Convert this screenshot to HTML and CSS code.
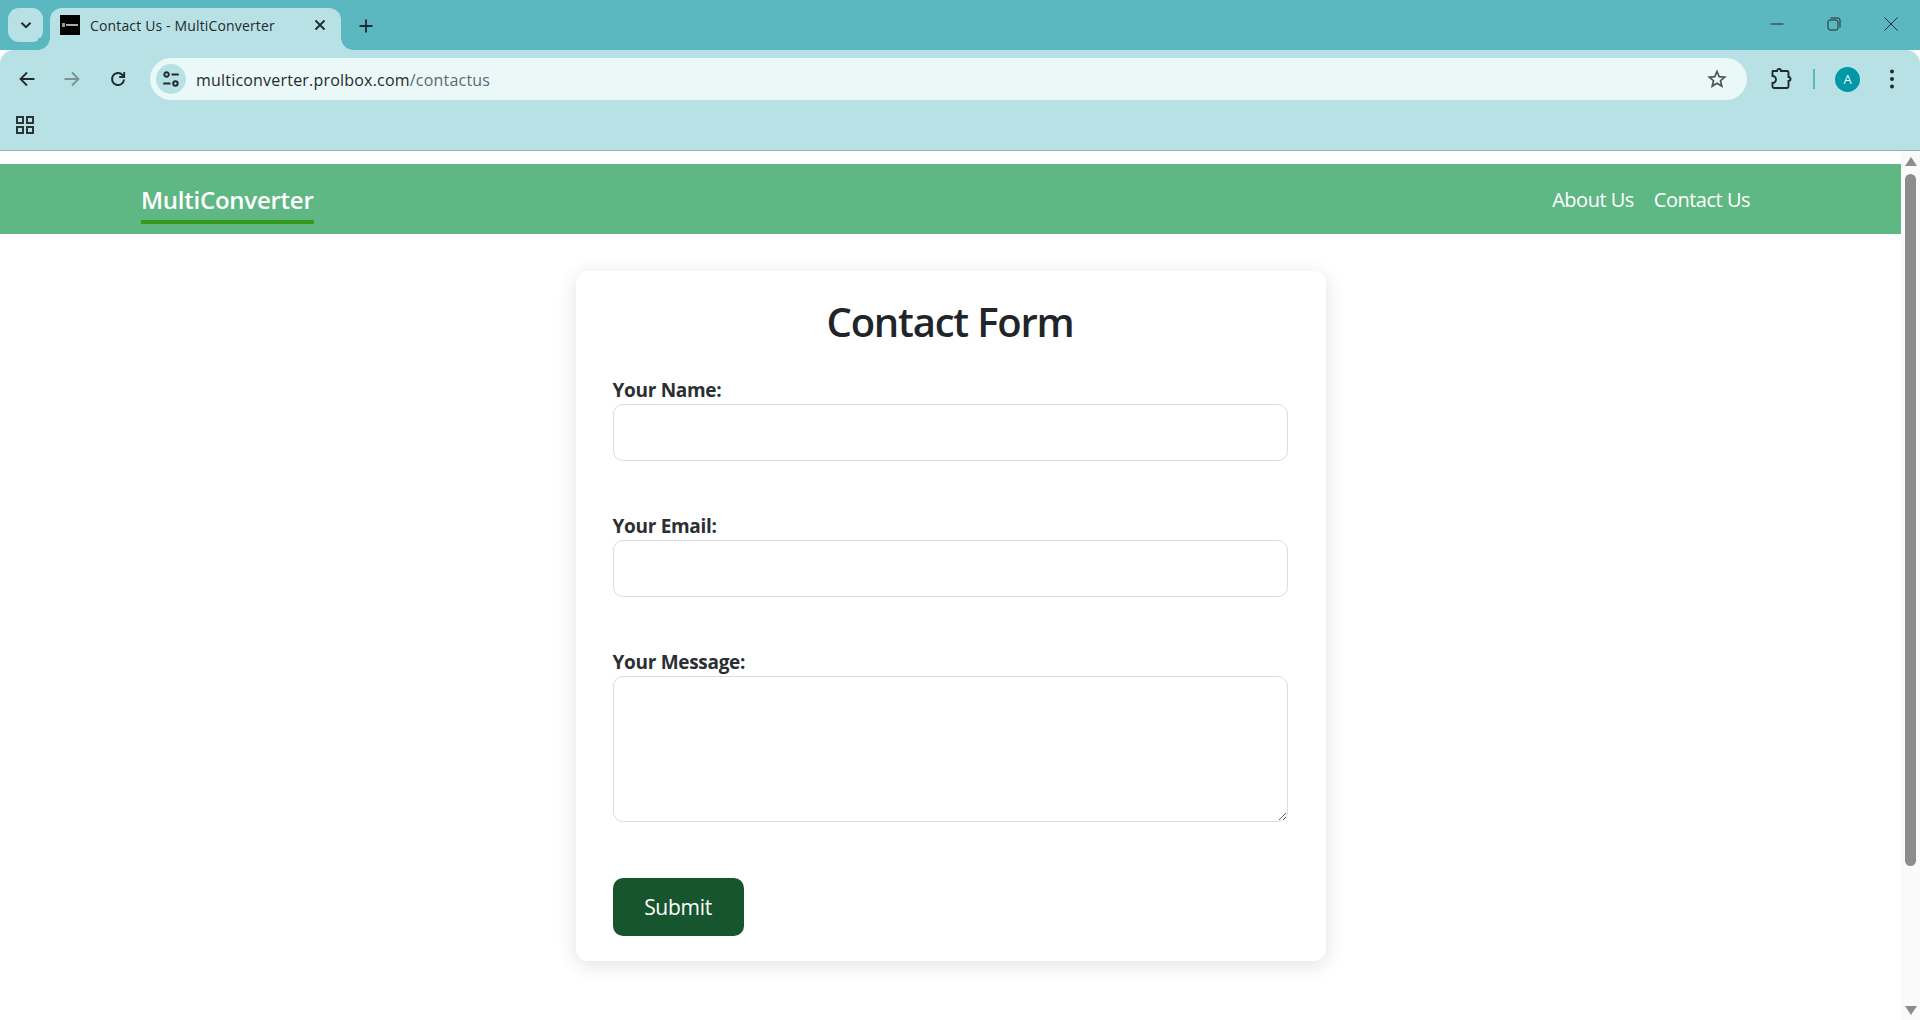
FILE: index.html
```html
<!DOCTYPE html>
<html lang="en">
<head>
  <meta charset="UTF-8" />
  <title>Contact Us - MultiConverter</title>
  <link rel="stylesheet" href="styles.css">
</head>
<body>

  <!-- browser frame -->
  <div class="tabstrip">
    <button class="tab-search">
      <svg width="14" height="14" viewBox="0 0 14 14"><path d="M2.5 4.8 7 9.2l4.500-4.400" fill="none" stroke="#1f2b2e" stroke-width="2"/></svg>
    </button>
    <div class="tab">
      <svg class="favicon" width="20" height="20" viewBox="0 0 20 20">
        <rect width="20" height="20" fill="#000"/>
        <rect x="2" y="8" width="3" height="4" fill="#999"/>
        <rect x="6" y="9" width="12" height="2" fill="#aaa"/>
      </svg>
      <span class="tab-title">Contact Us - MultiConverter</span>
      <svg class="tab-close" width="12" height="12" viewBox="0 0 12 12"><path d="M1.500 1.500l9 9m0-9l-9 9" stroke="#1f2b2e" stroke-width="1.800"/></svg>
    </div>
    <svg class="new-tab" width="14" height="14" viewBox="0 0 14 14"><path d="M7 .5v13M.5 7h13" stroke="#1f2b2e" stroke-width="1.800"/></svg>
    <div class="window-btns">
      <svg width="14" height="14" viewBox="0 0 14 14"><path d="M.5 7h13" stroke="#1f2b2e" stroke-width="1"/></svg>
      <svg width="14" height="14" viewBox="0 0 14 14" fill="none" stroke="#1f2b2e"><rect x="1" y="3" width="10" height="10" rx="2"/><path d="M3.500 1h7.500a2 2 0 0 1 2 2v7.500"/></svg>
      <svg width="14" height="14" viewBox="0 0 14 14"><path d="M.5.500l13 13m0-13l-13 13" stroke="#1f2b2e" stroke-width="1"/></svg>
    </div>
  </div>

  <div class="toolbar">
    <svg class="tool-icon" width="18" height="18" viewBox="0 0 18 18" fill="none" stroke="#1f2b2e" stroke-width="1.800"><path d="M16.500 9H2.500M9 2.500 2.500 9 9 15.500"/></svg>
    <svg class="tool-icon" width="18" height="18" viewBox="0 0 18 18" fill="none" stroke="#7d9093" stroke-width="1.800"><path d="M1.500 9h14M9 2.500 15.500 9 9 15.500"/></svg>
    <svg class="tool-icon" width="18" height="18" viewBox="0 0 18 18" fill="none" stroke="#1f2b2e" stroke-width="2"><path d="M15 9.500A6 6 0 1 1 13.300 4.800L15 6.500"/><path d="M15.200 2v5h-5" stroke-width="1.800"/></svg>
    <div class="omnibox">
      <span class="site-info">
        <svg width="20" height="20" viewBox="0 0 18 18" fill="none" stroke="#1f2b2e" stroke-width="1.800"><circle cx="5" cy="5" r="2"/><path d="M9.500 5H16M2 13h6.500"/><circle cx="13" cy="13" r="2"/></svg>
      </span>
      <span class="url">multiconverter.prolbox.com<span class="url-path">/contactus</span></span>
      <svg class="star" width="20" height="20" viewBox="0 0 20 20"><path d="M10 2.500l2.200 5.100 5.500.5-4.200 3.600 1.300 5.400L10 14.200l-4.800 2.900 1.300-5.400L2.300 8.100l5.500-.5z" fill="none" stroke="#4d5456" stroke-width="1.700"/></svg>
    </div>
    <svg class="ext-icon" width="22" height="22" viewBox="0 0 22 22"><path d="M2 3h5a2 2 0 0 1 4 0h6a1.500 1.500 0 0 1 1.500 1.500V9a2 2 0 0 1 0 4v5.500A1.500 1.500 0 0 1 17 20H4a1.500 1.500 0 0 1-1.500-1.500V15a3.500 3.500 0 0 0 0-7V3z" fill="none" stroke="#1f2b2e" stroke-width="1.900"/></svg>
    <span class="tool-divider"></span>
    <span class="avatar">A</span>
    <svg class="menu-icon" width="6" height="20" viewBox="0 0 6 20" fill="#1f2b2e"><circle cx="3" cy="2.500" r="2"/><circle cx="3" cy="10" r="2"/><circle cx="3" cy="17.500" r="2"/></svg>
  </div>

  <div class="bookmarks">
    <svg width="18" height="18" viewBox="0 0 18 18" fill="none" stroke="#2b3437" stroke-width="2"><rect x="1" y="1" width="6" height="6"/><rect x="11" y="1" width="6" height="6"/><rect x="1" y="11" width="6" height="6"/><rect x="11" y="11" width="6" height="6"/></svg>
  </div>

  <!-- page -->
  <div class="viewport">
    <div class="page">
      <nav class="navbar">
        <a class="brand" href="#">MultiConverter</a>
        <div class="nav-links">
          <a href="#">About Us</a>
          <a href="#">Contact Us</a>
        </div>
      </nav>

      <form class="contact-card">
        <h1>Contact Form</h1>
        <div class="form-group">
          <label for="name">Your Name:</label>
          <input type="text" id="name">
        </div>
        <div class="form-group">
          <label for="email">Your Email:</label>
          <input type="email" id="email">
        </div>
        <div class="form-group">
          <label for="message">Your Message:</label>
          <textarea id="message"></textarea>
        </div>
        <button type="submit" class="submit-btn">Submit</button>
      </form>
    </div>

    <div class="scrollbar">
      <span class="arrow-up"></span>
      <span class="thumb"></span>
      <span class="arrow-down"></span>
    </div>
  </div>

</body>
</html>
```

FILE: styles.css
```css
* { box-sizing: border-box; }

html, body {
  margin: 0;
  height: 1020px;
  overflow: hidden;
}

body {
  font-family: "Open Sans", "Noto Sans", sans-serif;
  background: #fff;
  color: #212529;
  display: flex;
  flex-direction: column;
}

/* browser frame */
.tabstrip {
  height: 50px;
  background: #5bb8c1;
  display: flex;
  align-items: flex-start;
  padding: 8px 0 0 8px;
}

.tab-search {
  width: 35px;
  height: 34px;
  border: none;
  border-radius: 11px;
  background: #b8e1e5;
  padding: 0;
  display: flex;
  align-items: center;
  justify-content: center;
}

.tab {
  position: relative;
  width: 291px;
  height: 42px;
  margin-left: 7px;
  padding: 0 15px 8px 10px;
  background: #b8e1e5;
  border-radius: 12px 12px 0 0;
  display: flex;
  align-items: center;
}

.tab::before, .tab::after {
  content: "";
  position: absolute;
  bottom: 0;
  width: 12px;
  height: 12px;
}
.tab::before {
  left: -12px;
  background: radial-gradient(circle at 0 0, #5bb8c1 11.500px, #b8e1e5 12px);
}
.tab::after {
  right: -12px;
  background: radial-gradient(circle at 100% 0, #5bb8c1 11.500px, #b8e1e5 12px);
}

.favicon { flex: none; }

.tab-title {
  margin-left: 10px;
  flex: 1;
  font-size: 14px;
  letter-spacing: 0.15px;
  color: #1f2b2e;
  white-space: nowrap;
}

.new-tab {
  margin: 11px 0 0 18px;
}

.window-btns {
  margin-left: auto;
  padding: 9px 22px 0 0;
  display: flex;
  gap: 43px;
}

.toolbar {
  height: 58px;
  background: #b8e1e5;
  border-radius: 14px 14px 0 0;
  display: flex;
  align-items: center;
  padding: 0 0 0 18px;
}

.tool-icon {
  margin-right: 27px;
  flex: none;
}
.tool-icon:nth-child(3) {
  margin-left: 1px;
  margin-right: 23px;
}

.omnibox {
  width: 1597px;
  height: 42px;
  border-radius: 21px;
  background: #ebf8f8;
  display: flex;
  align-items: center;
  padding: 0 20px 0 6px;
}

.site-info {
  width: 30px;
  height: 30px;
  border-radius: 50%;
  background: #b8e1e5;
  display: flex;
  align-items: center;
  justify-content: center;
}

.url {
  margin-left: 10px;
  padding-top: 1px;
  flex: 1;
  font-size: 16px;
  letter-spacing: 0.2px;
  color: #1f2b2e;
}
.url-path { color: #5c6a6e; }

.ext-icon { margin-left: 23px; }

.tool-divider {
  width: 2px;
  height: 20px;
  margin-left: 21px;
  background: #5bb8c1;
}

.avatar {
  width: 25px;
  height: 25px;
  margin-left: 20px;
  border-radius: 50%;
  background: #0097a7;
  color: #e8f7f8;
  font-size: 13px;
  display: flex;
  align-items: center;
  justify-content: center;
}

.menu-icon { margin-left: 29px; }

.bookmarks {
  height: 43px;
  background: #b8e1e5;
  border-bottom: 1px solid #93b4b9;
  padding: 8px 0 0 16px;
}
.bookmarks svg { display: block; }

/* page */
.viewport {
  flex: 1;
  display: flex;
  min-height: 0;
}

.page {
  flex: 1;
  padding-top: 13px;
}

.navbar {
  height: 70px;
  background: #5fb783;
  display: flex;
  align-items: center;
  justify-content: space-between;
  padding: 0 151px 0 141px;
}

.navbar a {
  color: #fff;
  text-decoration: none;
}

.brand {
  font-size: 24px;
  font-weight: 600;
  letter-spacing: -0.25px;
  line-height: 34px;
  padding-bottom: 3px;
  border-bottom: 4px solid #339a1a;
  margin-top: 9px;
}

.nav-links {
  display: flex;
  gap: 20px;
  font-size: 20px;
  letter-spacing: -0.5px;
}

.contact-card {
  width: 750px;
  margin: 37px auto 0;
  padding: 25px 38px 25px 37px;
  background: #fff;
  border-radius: 12px;
  box-shadow: 0 4px 20px rgba(0, 0, 0, 0.12);
}

.contact-card h1 {
  margin: 0 0 29px;
  font-size: 40px;
  font-weight: 600;
  line-height: 52px;
  letter-spacing: -1.2px;
  text-align: center;
}

.form-group { margin-bottom: 52px; }

.form-group label {
  display: block;
  height: 27px;
  line-height: 27px;
  font-size: 19px;
  font-weight: 700;
  letter-spacing: -0.3px;
  color: #2b2f33;
}

.form-group input, .form-group textarea {
  display: block;
  width: 100%;
  height: 57px;
  border: 1px solid #dcdcdc;
  border-radius: 10px;
  background: #fff;
  outline: none;
}

.form-group textarea {
  height: 146px;
  resize: vertical;
}

.form-group:last-of-type { margin-bottom: 56px; }

.submit-btn {
  display: block;
  width: 131px;
  height: 58px;
  border: none;
  border-radius: 10px;
  background: #17552f;
  color: #fff;
  font-family: inherit;
  font-size: 21px;
  letter-spacing: -0.3px;
}

.scrollbar {
  width: 19px;
  background: #fafafa;
  display: flex;
  flex-direction: column;
  align-items: center;
  padding: 6px 0 5px;
}

.arrow-up, .arrow-down {
  width: 0;
  height: 0;
  border-left: 6.500px solid transparent;
  border-right: 6.500px solid transparent;
}
.arrow-up { border-bottom: 9px solid #8c8c8c; }
.arrow-down { border-top: 9px solid #8c8c8c; margin-top: auto; }

.thumb {
  width: 11px;
  height: 692px;
  margin-top: 8px;
  border-radius: 6px;
  background: #8c8c8c;
}
```
